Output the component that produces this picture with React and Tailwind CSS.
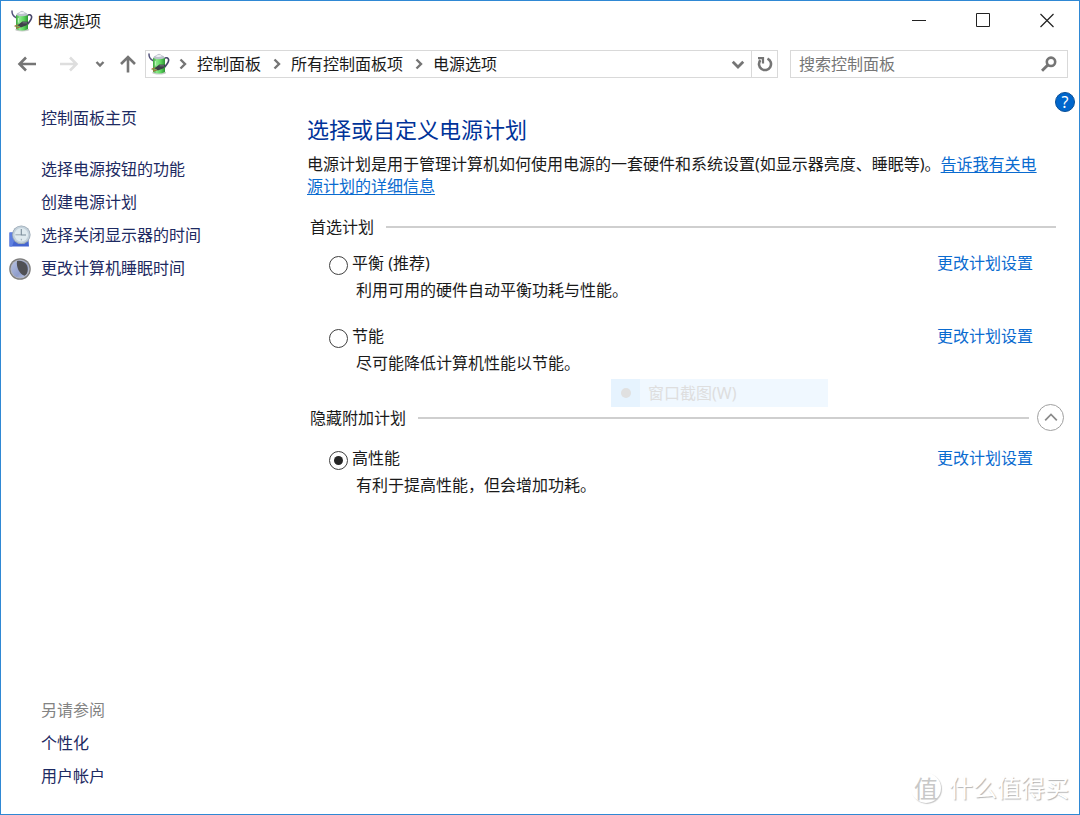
import React, { useState } from 'react';

const taskLinks = [
  { text: '选择电源按钮的功能' },
  { text: '创建电源计划' },
  { text: '选择关闭显示器的时间', icon: ClockIcon },
  { text: '更改计算机睡眠时间', icon: MoonIcon },
];

const preferredPlans = [
  { id: 'balanced', name: '平衡 (推荐)', desc: '利用可用的硬件自动平衡功耗与性能。' },
  { id: 'saver', name: '节能', desc: '尽可能降低计算机性能以节能。' },
];

const hiddenPlans = [
  { id: 'high', name: '高性能', desc: '有利于提高性能，但会增加功耗。' },
];

function PowerIcon() {
  return (
    <svg viewBox="0 0 22 22" className="w-[22px] h-[22px] shrink-0" aria-hidden="true">
      <defs>
        <linearGradient id="cell" x1="0" x2="1" y1="0" y2="0">
          <stop offset="0" stopColor="#3aa53e" />
          <stop offset="0.3" stopColor="#8be88a" />
          <stop offset="0.65" stopColor="#5bd45c" />
          <stop offset="1" stopColor="#2c9433" />
        </linearGradient>
      </defs>
      <path d="M1 1 Q0.8 5.6 5 7.6" fill="none" stroke="#55547c" strokeWidth="1.5" strokeLinecap="round" />
      <path d="M17 5 C20.4 4 21.4 6.6 20 9.4 C19 11.4 17.8 12.4 17 14" fill="none" stroke="#47466a" strokeWidth="1.6" strokeLinecap="round" />
      <ellipse cx="11.2" cy="19.8" rx="7" ry="1.7" fill="#c9cdca" />
      <path d="M5 5 V19 Q11 22.2 17 19 V5 Z" fill="url(#cell)" />
      <path d="M5 5 Q5.6 2.8 8.4 2.2 Q11 -0.8 13.6 2.2 Q16.4 2.8 17 5 Q11 7.4 5 5 Z" fill="#bcc2cc" />
      <path d="M7.6 3.4 Q11 0.4 14 3.2 Q11 4.6 7.6 3.4 Z" fill="#eef0f4" />
      <path d="M7.4 8 V12.6" stroke="#c2f7c0" strokeWidth="1" />
      <path d="M6.4 15.2 L11.4 11.6 L17.8 11.8 L15.6 15.2 L9.8 17.4 Z" fill="#3d4049" />
      <path d="M11.6 12.8 L16 12.9" stroke="#7d828d" strokeWidth="0.8" />
      <path d="M3.6 16.4 L7 14.8 M5 18 L9 16.8" stroke="#9b7b3f" strokeWidth="1.4" />
    </svg>
  );
}

function ClockIcon() {
  return (
    <svg viewBox="0 0 22 22" className="w-[22px] h-[22px]" aria-hidden="true">
      <path d="M0.5 7.5 H19 L20 21.5 H0.5 Z" fill="#4565cf" />
      <path d="M0.5 7.5 H8 L3 21.5 H0.5 Z" fill="#5f80e0" />
      <circle cx="12.3" cy="9.8" r="9.3" fill="#9ba9b5" />
      <circle cx="12.3" cy="9.8" r="8.5" fill="#c3d1db" />
      <circle cx="12.3" cy="9.8" r="6.8" fill="#dfeaef" />
      <path d="M12.3 4 V10 H17" fill="none" stroke="#7b8c99" strokeWidth="1.1" />
      <path d="M6.4 9.8 H12 M12.3 13.8 V15.4" stroke="#93a1ac" strokeWidth="0.9" />
    </svg>
  );
}

function MoonIcon() {
  return (
    <svg viewBox="0 0 22 22" className="w-[22px] h-[22px]" aria-hidden="true">
      <defs>
        <linearGradient id="moon" x1="0" x2="1" y1="0" y2="1">
          <stop offset="0" stopColor="#b9c4e4" />
          <stop offset="0.6" stopColor="#8f9dcb" />
          <stop offset="1" stopColor="#c7cfe8" />
        </linearGradient>
      </defs>
      <circle cx="11" cy="11" r="10.8" fill="#7d7d7d" />
      <circle cx="11" cy="11" r="9.6" fill="#b4b4b8" />
      <circle cx="11" cy="11" r="8.8" fill="url(#moon)" />
      <path d="M8 3 C14 1.6 19 5.6 18.8 11.4 C18.7 14.6 17.6 16.6 15.6 17.8 C10.6 16 7 9.6 8 3 Z" fill="#505054" />
    </svg>
  );
}

function Chevron({ className, d, size = 12, width = 2 }) {
  return (
    <svg viewBox="0 0 12 12" width={size} height={size} className={className} fill="none" stroke="currentColor" strokeWidth={width} aria-hidden="true">
      <path d={d} />
    </svg>
  );
}

function TitleBar() {
  return (
    <header className="h-10 flex items-center justify-between pl-2.5">
      <div className="flex items-center gap-1">
        <PowerIcon />
        <h1 className="text-base">电源选项</h1>
      </div>
      <div className="flex items-center">
        <button aria-label="最小化" className="w-16 h-10 grid place-items-center">
          <svg width="16" height="16" stroke="#222" fill="none"><path d="M1 7.5 H15" /></svg>
        </button>
        <button aria-label="最大化" className="w-16 h-10 grid place-items-center">
          <svg width="16" height="16" stroke="#222" fill="none"><path d="M1.5 0.5 H14.5 V13.5 H1.5 Z" /></svg>
        </button>
        <button aria-label="关闭" className="w-16 h-10 grid place-items-center">
          <svg width="16" height="16" stroke="#222" strokeWidth="1.2" fill="none"><path d="M1.5 1 L14.5 14 M14.5 1 L1.5 14" /></svg>
        </button>
      </div>
    </header>
  );
}

function Toolbar() {
  const crumbs = ['控制面板', '所有控制面板项', '电源选项'];
  return (
    <div className="flex items-center mt-[9px] pl-4 pr-[11px] text-[#757575]">
      <nav className="flex items-center shrink-0 w-32" aria-label="导航">
        <button aria-label="后退" className="w-5 h-7 grid place-items-center">
          <svg width="20" height="18" fill="none" stroke="currentColor" strokeWidth="2.6"><path d="M19 9 H3 M9 2.5 L2.5 9 L9 15.5" /></svg>
        </button>
        <button aria-label="前进" disabled className="w-5 h-7 ml-[22px] grid place-items-center text-[#dedede]">
          <svg width="20" height="18" fill="none" stroke="currentColor" strokeWidth="2.6"><path d="M1 9 H17 M11 2.5 L17.5 9 L11 15.5" /></svg>
        </button>
        <button aria-label="最近浏览的位置" className="w-3 h-7 ml-[15px] grid place-items-center">
          <Chevron d="M2.5 4 L6 7.5 L9.5 4" width={2.4} />
        </button>
        <button aria-label="上移" className="w-5 h-7 ml-3 grid place-items-center">
          <svg width="18" height="20" fill="none" stroke="currentColor" strokeWidth="2.6"><path d="M9 18.5 V3 M2 10 L9 3 L16 10" /></svg>
        </button>
      </nav>

      <div className="flex-1 min-w-0 flex h-7 border border-[#d9d9d9]">
        <div className="flex-1 flex items-center pl-0.5">
          <PowerIcon />
          <ol className="flex items-center">
            {crumbs.map((name) => (
              <li key={name} className="flex items-center">
                <Chevron d="M3.5 1.5 L8 6 L3.5 10.5" width={2.4} className="ml-[7px] mr-2" />
                <a href="#" className="text-base leading-[26px] text-[#1a1a1a] pr-[3px]">{name}</a>
              </li>
            ))}
          </ol>
        </div>
        <button aria-label="以前的位置" className="w-[26px] grid place-items-center">
          <Chevron d="M1.5 4 L6 8.5 L10.5 4" size={14} width={2.4} />
        </button>
        <button aria-label="刷新" className="w-[26px] border-l border-[#d9d9d9] grid place-items-center">
          <svg width="16" height="16" fill="none" stroke="currentColor" strokeWidth="2.6">
            <path d="M10.5 2.6 A6 6 0 1 1 3.4 4.2" />
            <path d="M1 2.2 H6 V7.4" strokeWidth="2.2" />
          </svg>
        </button>
      </div>

      <div className="flex items-center w-[278px] h-7 ml-3 border border-[#d9d9d9]">
        <input
          type="text"
          aria-label="搜索控制面板"
          placeholder="搜索控制面板"
          className="flex-1 min-w-0 pl-2 text-base leading-[26px] outline-none placeholder:text-[#767676]"
        />
        <button aria-label="搜索" className="w-9 h-[26px] grid place-items-center">
          <svg width="16" height="16" fill="none" stroke="currentColor" strokeWidth="2.6">
            <circle cx="10" cy="5.8" r="4.2" />
            <path d="M6.8 9 L1 14.8" strokeWidth="3" />
          </svg>
        </button>
      </div>
    </div>
  );
}

function Sidebar() {
  return (
    <aside className="w-[306px] shrink-0 flex flex-col justify-between pt-6 pb-[21px] text-[#1d2a62] leading-[33px]">
      <nav>
        <a href="#" className="block ml-10">控制面板主页</a>
        <ul className="mt-[18px]">
          {taskLinks.map(({ text, icon: Icon }) => (
            <li key={text} className="flex items-center pl-2">
              <span className="w-8 shrink-0">{Icon && <Icon />}</span>
              <a href="#">{text}</a>
            </li>
          ))}
        </ul>
      </nav>
      <nav className="ml-10">
        <h2 className="text-[#838383]">另请参阅</h2>
        <a href="#" className="block">个性化</a>
        <a href="#" className="block">用户帐户</a>
      </nav>
    </aside>
  );
}

function Plan({ plan, selected, onSelect }) {
  return (
    <div className="flex items-start justify-between pl-[22px] pr-[31px] leading-[27px]">
      <div className="flex items-start gap-1">
        <input
          type="radio"
          name="plan"
          id={plan.id}
          checked={selected === plan.id}
          onChange={() => onSelect(plan.id)}
          className="appearance-none mt-1.5 w-[19px] h-[19px] shrink-0 rounded-full border border-[#404040] bg-white grid place-content-center before:w-[9px] before:h-[9px] before:rounded-full checked:before:bg-[#262626]"
        />
        <div>
          <label htmlFor={plan.id} className="block">{plan.name}</label>
          <p className="pl-1">{plan.desc}</p>
        </div>
      </div>
      <a href="#" className="text-[#0a6bd0] shrink-0">更改计划设置</a>
    </div>
  );
}

function Main() {
  const [selected, setSelected] = useState('high');
  const [open, setOpen] = useState(true);

  return (
    <main className="flex-1 min-w-0 pt-3.5 text-[#1a1a1a]">
      <div className="flex justify-end pr-1">
        <button aria-label="帮助" className="w-5 h-5 rounded-full bg-[#0066cc] border border-[#0a4f96] text-white text-base leading-none grid place-items-center">
          ?
        </button>
      </div>

      <div className="mt-0.5 pr-[15px]">
        <h2 className="text-[22px] leading-[30px] text-[#003399]">选择或自定义电源计划</h2>
        <p className="mt-[9px] pr-[15px] leading-[22px]">
          电源计划是用于管理计算机如何使用电源的一套硬件和系统设置(如显示器亮度、睡眠等)。
          <a href="#" className="text-[#0a6bd0] underline underline-offset-2">告诉我有关电源计划的详细信息</a>
        </p>

        <section className="mt-[18px]">
          <div className="flex items-center gap-3 pl-[3px] pr-2 mb-[11px]">
            <h3 className="leading-6">首选计划</h3>
            <div className="flex-1 h-0.5 bg-[#cfcfcf]" />
          </div>
          <div className="flex flex-col gap-[19px]">
            {preferredPlans.map((plan) => (
              <Plan key={plan.id} plan={plan} selected={selected} onSelect={setSelected} />
            ))}
          </div>
        </section>

        <section className="mt-[27px]">
          <div className="flex items-center pl-[3px] mb-3.5">
            <h3 className="leading-6">隐藏附加计划</h3>
            <div className="flex-1 h-0.5 ml-3 mr-2 bg-[#cfcfcf]" />
            <button
              aria-label="隐藏附加计划"
              aria-expanded={open}
              onClick={() => setOpen(!open)}
              className="w-[27px] h-[27px] rounded-full border border-[#a0a0a0] text-[#8a8a8a] grid place-items-center"
            >
              <Chevron d="M1 8 L6 3 L11 8" size={14} width={1.5} />
            </button>
          </div>
          {open && hiddenPlans.map((plan) => (
            <Plan key={plan.id} plan={plan} selected={selected} onSelect={setSelected} />
          ))}
        </section>
      </div>
    </main>
  );
}

export default function App() {
  return (
    <div className="relative min-h-screen flex flex-col bg-white border border-[#2f88d4] text-base text-[#1a1a1a] font-['Noto_Sans','Noto_Sans_CJK_SC',sans-serif]">
      <TitleBar />
      <Toolbar />
      <div className="flex-1 flex">
        <Sidebar />
        <Main />
      </div>

      {/* Fading capture menu item */}
      <div className="absolute left-[610px] top-[378px] w-[217px] h-7 flex items-center bg-[#f0f8ff] text-[#dedede] pointer-events-none">
        <span className="w-[29px] h-full bg-[#e6f3fe] grid place-items-center">
          <span className="w-2.5 h-2.5 rounded-full bg-[#e0e0e0]" />
        </span>
        <span className="ml-2">窗口截图(W)</span>
      </div>

      {/* Watermark */}
      <div className="absolute right-2.5 bottom-2.5 flex items-center gap-2 text-2xl leading-8 text-white pointer-events-none">
        <span className="w-[30px] h-[30px] rounded-full grid place-items-center text-[#c8c8c8] shadow-[1px_1px_1px_#c8c8c8]">值</span>
        <span className="[text-shadow:1px_1px_1px_#b4b4b4]">什么值得买</span>
      </div>
    </div>
  );
}
